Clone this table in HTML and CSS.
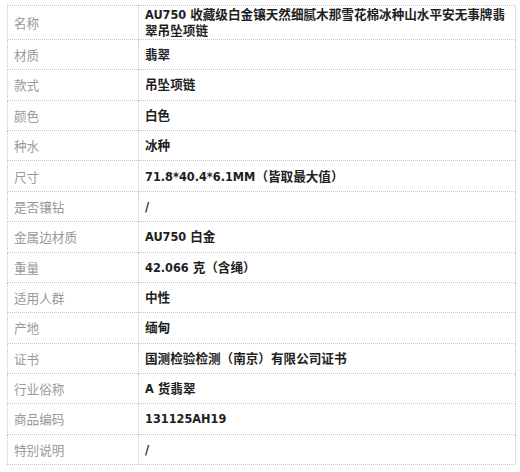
FILE: index.html
```html
<!DOCTYPE html>
<html lang="zh">
<head>
<meta charset="utf-8">
<link rel="stylesheet" href="styles.css">
</head>
<body>
<table class="spec">
  <colgroup><col class="c-label"><col class="c-value"></colgroup>
  <tbody>
    <tr class="row-first"><td class="label">名称</td><td class="value value-multi">AU750 收藏级白金镶天然细腻木那雪花棉冰种山水平安无事牌翡翠吊坠项链</td></tr>
    <tr><td class="label">材质</td><td class="value">翡翠</td></tr>
    <tr><td class="label">款式</td><td class="value">吊坠项链</td></tr>
    <tr><td class="label">颜色</td><td class="value">白色</td></tr>
    <tr><td class="label">种水</td><td class="value">冰种</td></tr>
    <tr><td class="label">尺寸</td><td class="value">71.8*40.4*6.1MM（皆取最大值）</td></tr>
    <tr><td class="label">是否镶钻</td><td class="value">/</td></tr>
    <tr><td class="label">金属边材质</td><td class="value">AU750 白金</td></tr>
    <tr><td class="label">重量</td><td class="value">42.066 克（含绳）</td></tr>
    <tr><td class="label">适用人群</td><td class="value">中性</td></tr>
    <tr><td class="label">产地</td><td class="value">缅甸</td></tr>
    <tr><td class="label">证书</td><td class="value">国测检验检测（南京）有限公司证书</td></tr>
    <tr><td class="label">行业俗称</td><td class="value">A 货翡翠</td></tr>
    <tr><td class="label">商品编码</td><td class="value">131125AH19</td></tr>
    <tr><td class="label">特别说明</td><td class="value">/</td></tr>
  </tbody>
</table>
</body>
</html>
```
FILE: styles.css
```css
html, body {
  margin: 0;
  padding: 0;
  background: #ffffff;
}
body {
  padding: 5px 0 0 7px;
  font-family: "DejaVu Sans Condensed", "DejaVu Sans", "Noto Sans CJK SC", sans-serif;
  font-size: 12.6px;
}
.spec {
  width: 508px;
  table-layout: fixed;
  border-collapse: collapse;
}
.c-label { width: 131px; }
.c-value { width: 377px; }
.spec tr { height: 30.36px; }
.spec tr.row-first { height: 34px; }
.spec td {
  border: 1px dotted #c4c4c4;
  padding: 0 2px 0 6px;
  vertical-align: middle;
  line-height: 1.2;
}
.label {
  color: #999999;
  font-family: "Noto Sans CJK SC", sans-serif;
  font-weight: 400;
}
.value {
  color: #1e1e1e;
  font-weight: 700;
  font-stretch: condensed;
}
.value-multi {
  line-height: 12px;
  padding-top: 1px;
}
```
